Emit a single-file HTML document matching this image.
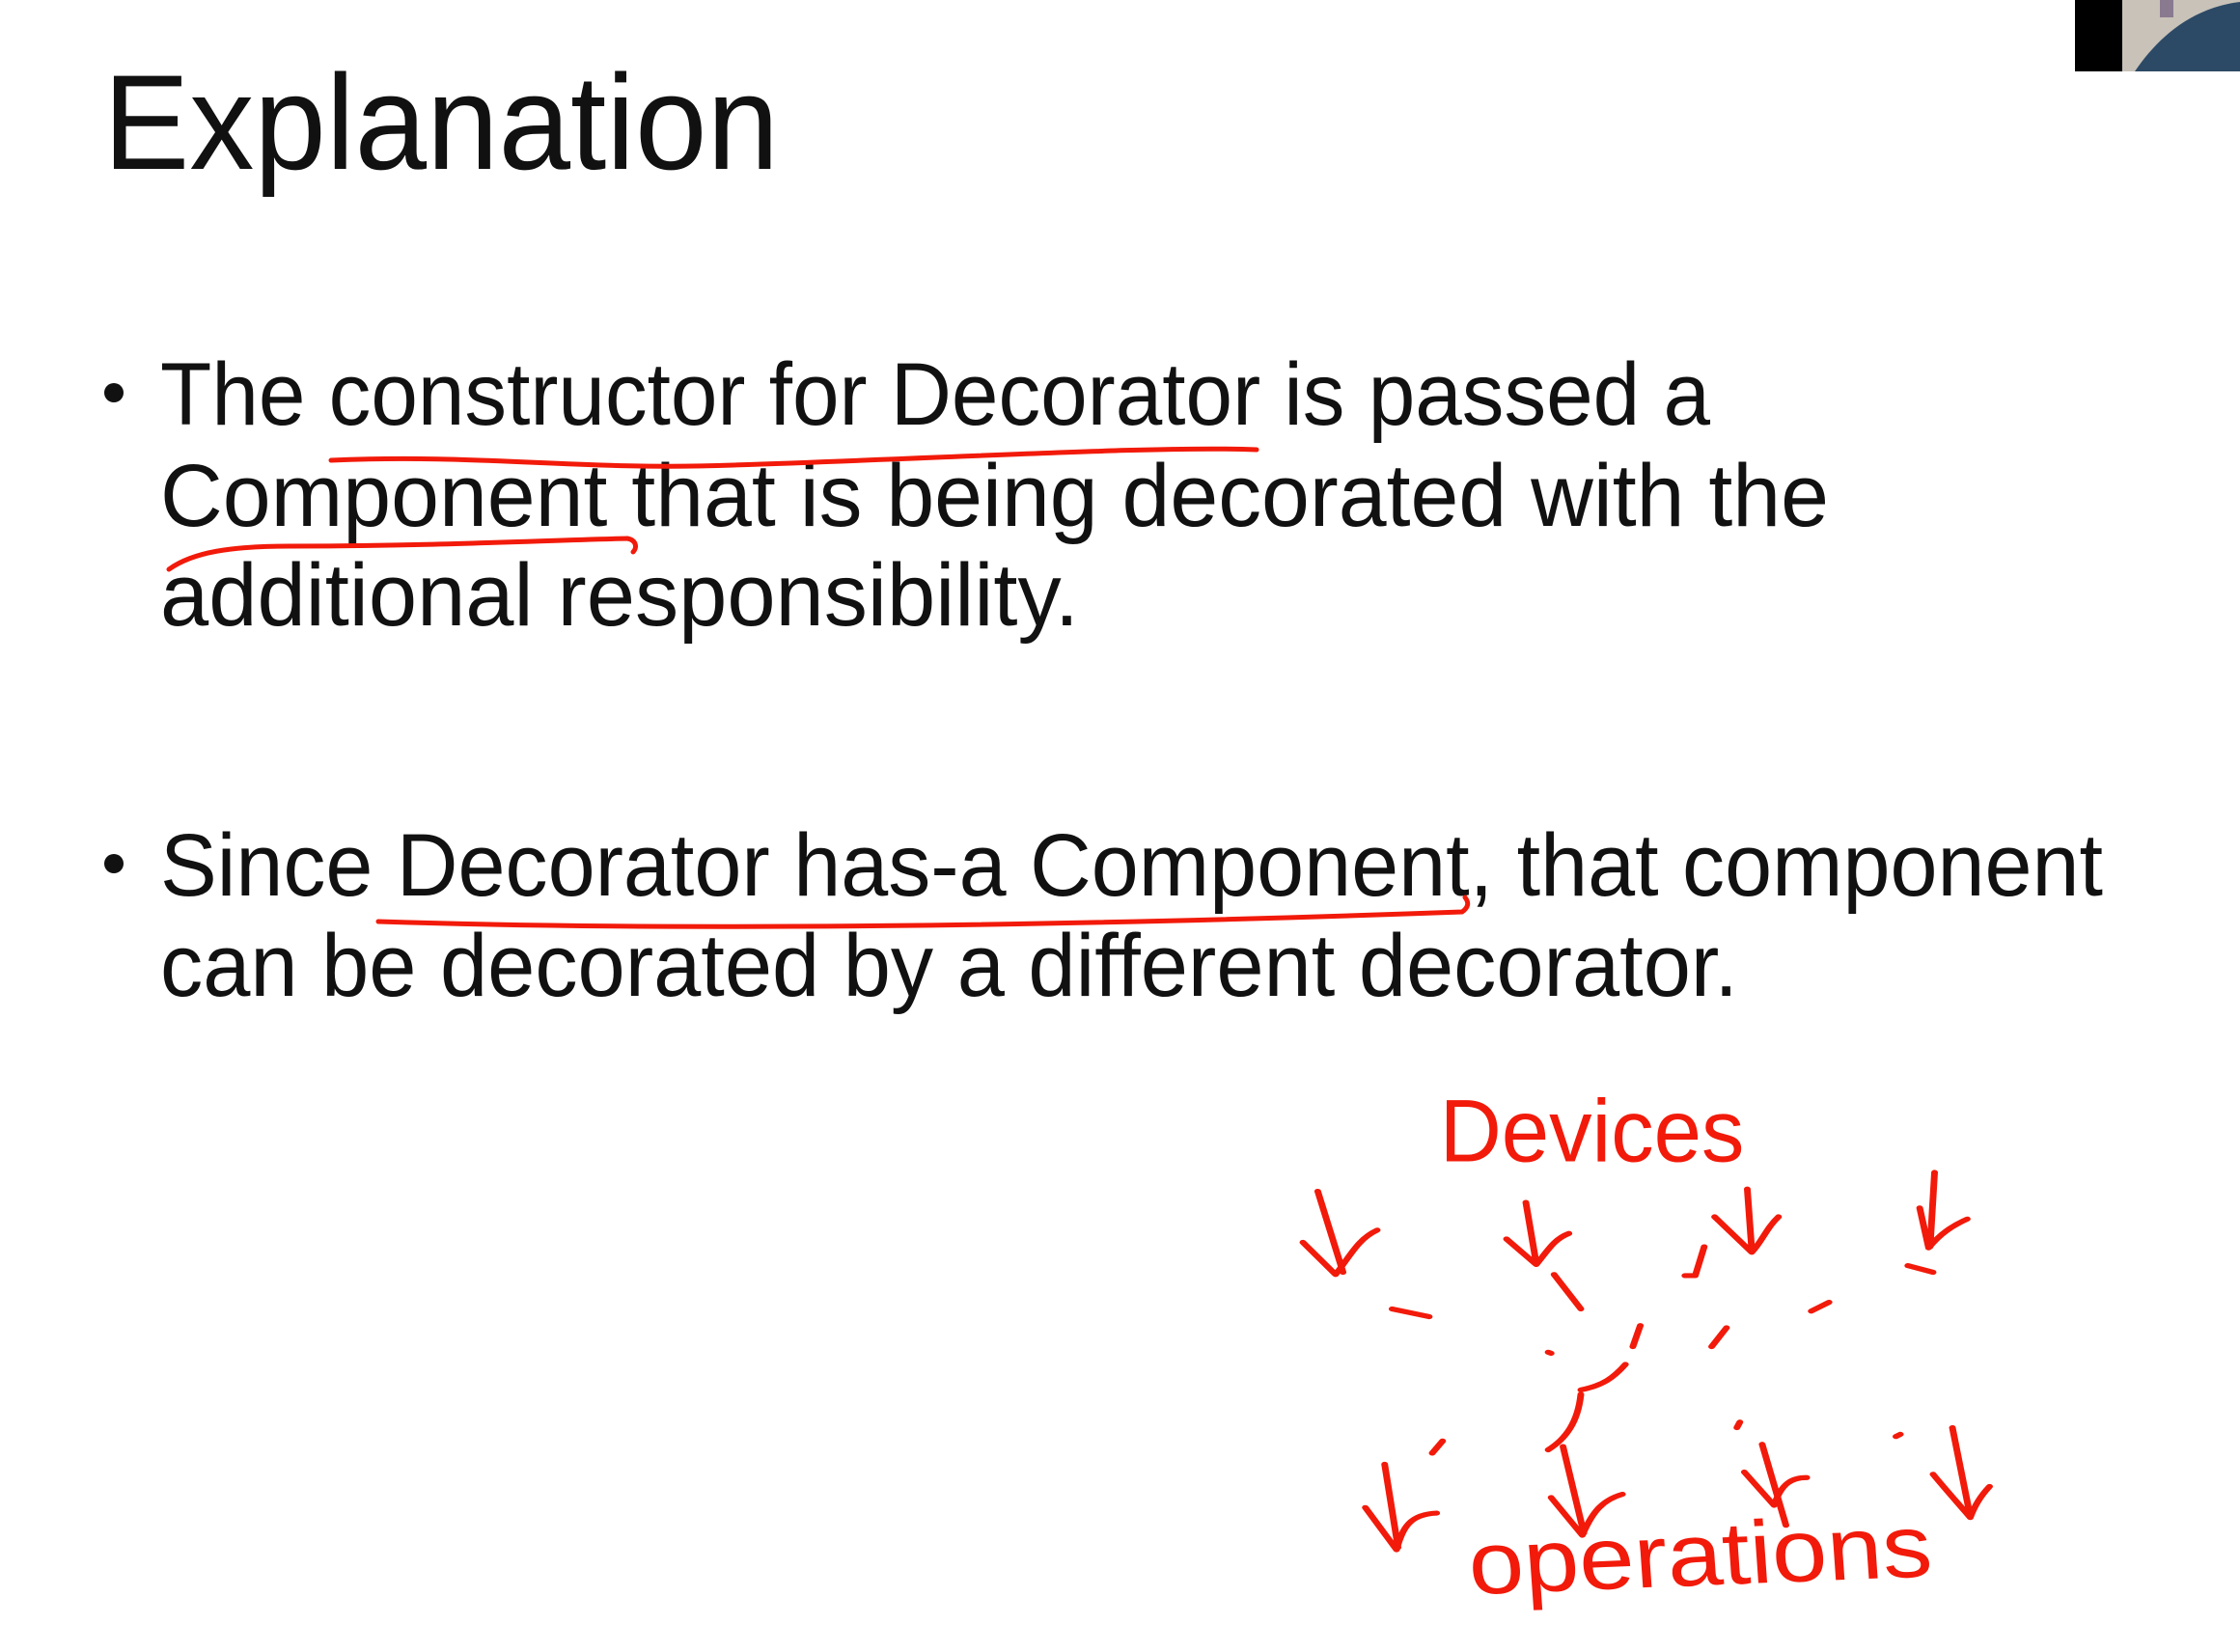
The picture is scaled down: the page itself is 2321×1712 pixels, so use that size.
<!DOCTYPE html>
<html><head><meta charset="utf-8"><style>
html,body{margin:0;padding:0;background:#fff;width:2321px;height:1712px;overflow:hidden}
svg{display:block}
</style></head><body>
<svg width="2321" height="1712" viewBox="0 0 2321 1712" xmlns="http://www.w3.org/2000/svg">
<rect width="2321" height="1712" fill="#fff"/>
<rect x="2150" y="0" width="50" height="74" fill="#000"/>
<rect x="2199" y="0" width="122" height="74" fill="#c8c2b8"/>
<rect x="2238" y="0" width="14" height="18" fill="#8a7a90"/>
<path d="M2212 74 C2235 40 2270 8 2321 2 L2321 74 Z" fill="#2c4a66"/>
<g font-family="Liberation Sans, sans-serif" fill="#111">
<text x="107" y="175" font-size="140" textLength="700" lengthAdjust="spacingAndGlyphs">Explanation</text>
<circle cx="118" cy="407" r="10"/>
<circle cx="118" cy="895" r="10"/>
<text x="166" y="440" font-size="92" textLength="1606" lengthAdjust="spacingAndGlyphs">The constructor for Decorator is passed a</text>
<text x="166" y="545" font-size="92" textLength="1729" lengthAdjust="spacingAndGlyphs">Component that is being decorated with the</text>
<text x="166" y="648" font-size="92" textLength="952" lengthAdjust="spacingAndGlyphs">additional responsibility.</text>
<text x="166" y="928" font-size="92" textLength="2013" lengthAdjust="spacingAndGlyphs">Since Decorator has-a Component, that component</text>
<text x="166" y="1032" font-size="92" textLength="1635" lengthAdjust="spacingAndGlyphs">can be decorated by a different decorator.</text>
</g>
<g fill="none" stroke="#f21a0a" stroke-width="5" stroke-linecap="round" stroke-linejoin="round">
<path d="M343 477 C500 470 600 488 760 482 C1000 474 1200 462 1302 466"/>
<path d="M175 590 C200 572 240 566 300 566 C450 566 560 560 650 558 C660 560 660 568 656 572"/>
<path d="M392 955 C700 965 1100 960 1515 945 C1522 940 1522 935 1518 930"/>
</g>
<g transform="translate(1330,1100) scale(1.54,1.15) translate(-1330,-1100)">
<g fill="none" stroke="#f21a0a" stroke-width="4.5" stroke-linecap="round" stroke-linejoin="round">
<path d="M1353 1217 L1370 1290 M1343 1263 L1365 1292 C1375 1275 1380 1260 1393 1252"/>
<path d="M1493 1227 L1500 1282 M1480 1260 L1500 1283 C1508 1270 1512 1260 1522 1255"/>
<path d="M1642 1215 L1645 1270 M1620 1240 L1645 1272 C1652 1262 1655 1250 1663 1240"/>
<path d="M1768 1200 L1765 1267 M1758 1232 L1764 1268 C1772 1255 1780 1248 1790 1242 M1750 1284 L1767 1290"/>
<path d="M1398 1463 L1407 1538 M1385 1502 L1406 1540 C1410 1520 1415 1508 1433 1507"/>
<path d="M1518 1447 L1532 1525 M1510 1493 L1531 1527 C1538 1505 1545 1495 1558 1490"/>
<path d="M1652 1445 L1668 1518 M1640 1470 L1660 1500 C1665 1480 1672 1475 1682 1475"/>
<path d="M1780 1430 L1792 1510 M1767 1472 C1775 1485 1785 1500 1792 1511 C1795 1500 1800 1490 1805 1483"/>
<path d="M1403 1323 L1428 1330 M1512 1292 L1530 1323 M1530 1396 C1545 1392 1552 1385 1560 1373 M1530 1400 C1528 1425 1520 1440 1508 1450 M1570 1338 L1565 1357 M1628 1340 L1618 1357 M1697 1317 L1685 1325 M1613 1267 L1607 1293 L1600 1293 M1437 1442 L1430 1453 M1508 1362 L1510 1363 M1745 1436 L1742 1438 M1637 1425 L1635 1430"/>
</g>
<g font-family="Liberation Sans, sans-serif" fill="#f21a0a" font-size="80">
<text x="1435" y="1190" textLength="205" lengthAdjust="spacingAndGlyphs">Devices</text>
<text x="1455" y="1572" textLength="312" lengthAdjust="spacingAndGlyphs" transform="rotate(-3 1610 1560)">operations</text>
</g>
</g>
</svg>
</body></html>
